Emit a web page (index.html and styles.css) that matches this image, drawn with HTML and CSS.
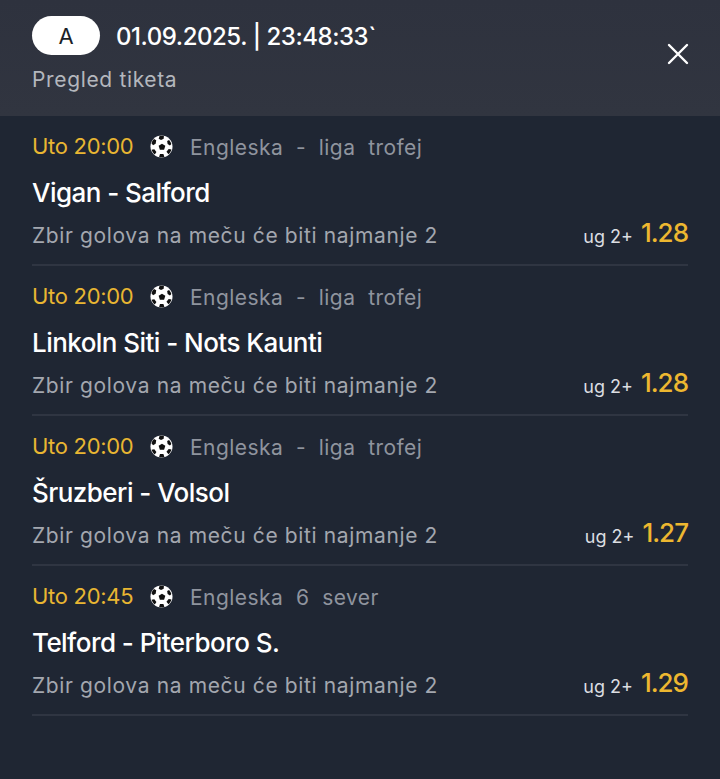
FILE: index.html
```html
<!DOCTYPE html>
<html lang="en">
<head>
  <meta charset="UTF-8">
  <title>Pregled tiketa</title>
  <link rel="stylesheet" href="styles.css">
</head>
<body>

  <svg class="sprite" width="0" height="0">
    <symbol id="ball" viewBox="0 0 24 24">
      <circle cx="12" cy="12" r="11.5" fill="#fff"/>
      <path fill="#111" d="M12.500 9l3.500 2.300-1.300 4h-4.400l-1.300-4zM10 .800c1.500-.2 3-.1 4.500.3l-.2 2.900-2.800 1.300-2.400-1.500zM1.500 8.500c.6-1.700 1.500-3.100 2.700-4.200l2.300 1.300-.6 3.500-2.700 1.600zM22.300 9.500c-.4-1.600-1.200-3.100-2.400-4.400l-2 1.100.5 3.300 2.400 1.500zM5 20.300c-1.600-1.300-2.800-3-3.400-4.900l2.900-.6 2.200 3zM19.300 20.100c1.500-1.300 2.600-3 3.100-4.900l-2.900-.7-2.300 3zM9.500 22.900l.9-3.200h3.600l1 3.200c-1.800.4-3.700.4-5.500 0z"/>
    </symbol>
  </svg>

  <header class="top">
    <div class="top-row">
      <span class="pill">A</span>
      <span class="stamp">01.09.2025. | 23:48:33`</span>
    </div>
    <div class="top-sub">Pregled tiketa</div>
    <svg class="close" width="22" height="22" viewBox="0 0 22 22">
      <path d="M2 2l18 18M20 2L2 20" stroke="#fff" stroke-width="2.400" stroke-linecap="round"/>
    </svg>
  </header>

  <main class="list">
    <div class="match">
      <div class="meta">
        <span class="time">Uto 20:00</span>
        <svg class="ball" width="23" height="23"><use href="#ball"/></svg>
        <span class="league">Engleska&nbsp; -&nbsp; liga&nbsp; trofej</span>
      </div>
      <div class="teams">Vigan - Salford</div>
      <div class="pick">
        <span class="desc">Zbir golova na meču će biti najmanje 2</span>
        <span class="code">ug 2+</span>
        <span class="odd">1.28</span>
      </div>
    </div>

    <div class="match">
      <div class="meta">
        <span class="time">Uto 20:00</span>
        <svg class="ball" width="23" height="23"><use href="#ball"/></svg>
        <span class="league">Engleska&nbsp; -&nbsp; liga&nbsp; trofej</span>
      </div>
      <div class="teams">Linkoln Siti - Nots Kaunti</div>
      <div class="pick">
        <span class="desc">Zbir golova na meču će biti najmanje 2</span>
        <span class="code">ug 2+</span>
        <span class="odd">1.28</span>
      </div>
    </div>

    <div class="match">
      <div class="meta">
        <span class="time">Uto 20:00</span>
        <svg class="ball" width="23" height="23"><use href="#ball"/></svg>
        <span class="league">Engleska&nbsp; -&nbsp; liga&nbsp; trofej</span>
      </div>
      <div class="teams">Šruzberi - Volsol</div>
      <div class="pick">
        <span class="desc">Zbir golova na meču će biti najmanje 2</span>
        <span class="code">ug 2+</span>
        <span class="odd">1.27</span>
      </div>
    </div>

    <div class="match">
      <div class="meta">
        <span class="time">Uto 20:45</span>
        <svg class="ball" width="23" height="23"><use href="#ball"/></svg>
        <span class="league">Engleska&nbsp; 6&nbsp; sever</span>
      </div>
      <div class="teams">Telford - Piterboro S.</div>
      <div class="pick">
        <span class="desc">Zbir golova na meču će biti najmanje 2</span>
        <span class="code">ug 2+</span>
        <span class="odd">1.29</span>
      </div>
    </div>
  </main>

</body>
</html>
```

FILE: styles.css
```css
* {
  box-sizing: border-box;
}

html, body {
  height: 100%;
}

body {
  margin: 0;
  background: #1f2633;
  font-family: 'Inter', 'Noto Sans', sans-serif;
  overflow: hidden;
}

.sprite {
  position: absolute;
}

.top {
  position: relative;
  height: 116px;
  padding: 16px 32px 0;
  background: linear-gradient(to bottom, #2e323e, #313540);
}

.top-row {
  display: flex;
  align-items: center;
  gap: 16px;
}

.pill {
  width: 68px;
  height: 39px;
  border-radius: 20px;
  background: white;
  color: #1b1f28;
  font-size: 22px;
  display: flex;
  align-items: center;
  justify-content: center;
}

.stamp {
  position: relative;
  top: 1px;
  color: #fff;
  font-size: 24px;
  font-weight: 500;
  letter-spacing: -0.45px;
}

.top-sub {
  margin-top: 12px;
  color: #b4b7bd;
  font-size: 21px;
  letter-spacing: 0.65px;
}

.close {
  position: absolute;
  top: 43px;
  right: 31px;
}

.list {
  padding: 0 32px;
}

.match {
  height: 150px;
  border-bottom: 2px solid #2f3542;
  padding-top: 15px;
}

.meta {
  display: flex;
  align-items: center;
  height: 30px;
}

.time {
  color: #e9b632;
  font-size: 22px;
  letter-spacing: -0.3px;
  width: 118px;
}

.ball {
  margin-right: 17px;
}

.league {
  position: relative;
  top: 1px;
  color: #8f949e;
  font-size: 21px;
  letter-spacing: 0.45px;
}

.teams {
  margin-top: 16px;
  color: #fff;
  font-size: 26px;
  font-weight: 500;
  letter-spacing: -0.55px;
  line-height: 32px;
}

.pick {
  display: flex;
  align-items: center;
  margin-top: 10px;
  height: 32px;
}

.desc {
  flex: 1;
  color: #a3a7af;
  font-size: 21px;
  letter-spacing: 0.63px;
}

.code {
  position: relative;
  top: 1px;
  color: #dcdee2;
  font-size: 18px;
  margin-right: 8px;
}

.odd {
  position: relative;
  top: -3px;
  color: #edb730;
  font-size: 26px;
  font-weight: 500;
  letter-spacing: -1px;
}
```
